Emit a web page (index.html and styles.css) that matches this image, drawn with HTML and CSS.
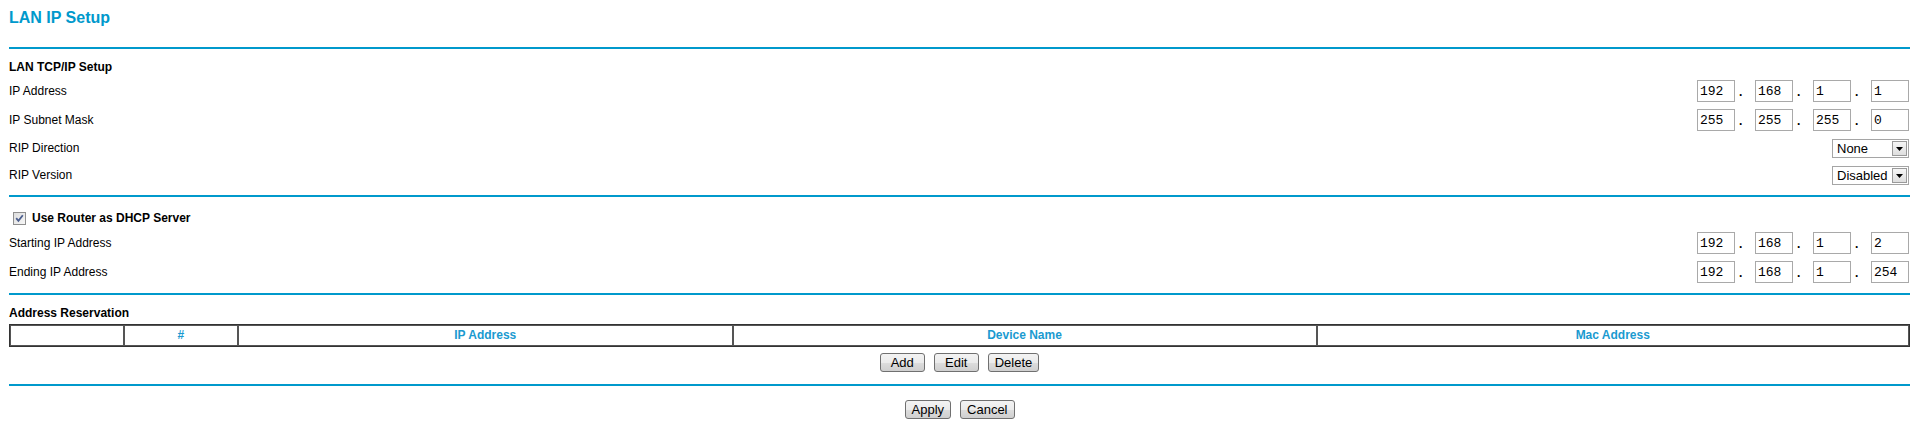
FILE: index.html
```html
<!DOCTYPE html>
<html>
<head>
<meta charset="utf-8">
<title>LAN IP Setup</title>
<link rel="stylesheet" href="styles.css">
</head>
<body>
<div class="page">
  <h1 class="title">LAN IP Setup</h1>
  <div class="rule rule-top"></div>

  <div class="sec-head head-tcp">LAN TCP/IP Setup</div>
  <div class="row row-ip1">
    <span class="label">IP Address</span>
    <div class="ip">
      <input class="oct" type="text" value="192"><span class="dot">.</span><input class="oct" type="text" value="168"><span class="dot">.</span><input class="oct" type="text" value="1"><span class="dot">.</span><input class="oct" type="text" value="1">
    </div>
  </div>
  <div class="row row-ip2">
    <span class="label">IP Subnet Mask</span>
    <div class="ip">
      <input class="oct" type="text" value="255"><span class="dot">.</span><input class="oct" type="text" value="255"><span class="dot">.</span><input class="oct" type="text" value="255"><span class="dot">.</span><input class="oct" type="text" value="0">
    </div>
  </div>
  <div class="row row-sel row-sel1">
    <span class="label">RIP Direction</span>
    <div class="select">
      <span class="select-text">None</span>
      <span class="select-btn"><svg width="13" height="13" viewBox="0 0 13 13"><path d="M3 5h7l-3.5 4z" fill="#000"/></svg></span>
    </div>
  </div>
  <div class="row row-sel row-sel2">
    <span class="label">RIP Version</span>
    <div class="select">
      <span class="select-text">Disabled</span>
      <span class="select-btn"><svg width="13" height="13" viewBox="0 0 13 13"><path d="M3 5h7l-3.5 4z" fill="#000"/></svg></span>
    </div>
  </div>
  <div class="rule rule-mid"></div>

  <div class="sec-head head-dhcp">
    <span class="check"><svg width="13" height="13" viewBox="0 0 13 13"><defs><linearGradient id="cb" x1="0" y1="0" x2="1" y2="1"><stop offset="0" stop-color="#dcdcdc"/><stop offset="1" stop-color="#f8f8f8"/></linearGradient></defs><rect x="0.5" y="0.5" width="12" height="12" fill="url(#cb)" stroke="#8f8f8f"/><path d="M3.2 6.2 L5.4 8.8 L9.8 3.2" stroke="#4b5e8e" stroke-width="1.8" fill="none"/></svg></span>
    <span>Use Router as DHCP Server</span>
  </div>
  <div class="row row-ip3">
    <span class="label">Starting IP Address</span>
    <div class="ip">
      <input class="oct" type="text" value="192"><span class="dot">.</span><input class="oct" type="text" value="168"><span class="dot">.</span><input class="oct" type="text" value="1"><span class="dot">.</span><input class="oct" type="text" value="2">
    </div>
  </div>
  <div class="row row-ip4">
    <span class="label">Ending IP Address</span>
    <div class="ip">
      <input class="oct" type="text" value="192"><span class="dot">.</span><input class="oct" type="text" value="168"><span class="dot">.</span><input class="oct" type="text" value="1"><span class="dot">.</span><input class="oct" type="text" value="254">
    </div>
  </div>
  <div class="rule rule-mid"></div>

  <div class="sec-head head-res">Address Reservation</div>
  <table class="res">
    <colgroup>
      <col class="c1"><col class="c2"><col class="c3"><col class="c4"><col class="c5">
    </colgroup>
    <tr>
      <th></th><th>#</th><th>IP Address</th><th>Device Name</th><th>Mac Address</th>
    </tr>
  </table>
  <div class="btns btns-res">
    <button class="btn">Add</button><button class="btn">Edit</button><button class="btn">Delete</button>
  </div>
  <div class="rule rule-bot"></div>
  <div class="btns btns-apply">
    <button class="btn">Apply</button><button class="btn">Cancel</button>
  </div>
</div>
</body>
</html>
```

FILE: styles.css
```css
html, body {
  margin: 0;
  padding: 0;
  background: #fff;
}
body {
  font-family: "Liberation Sans", Arial, sans-serif;
  font-size: 12px;
  color: #000;
}
.page {
  padding: 8px 10px 0 9px;
}
.title {
  margin: 0;
  font-size: 16px;
  line-height: 20px;
  font-weight: bold;
  color: #0099cc;
}
.rule {
  height: 2px;
  background: #0099cc;
}
.rule-top { margin-top: 19px; }
.rule-mid { margin-top: 10px; }
.rule-bot { margin-top: 12px; }

.sec-head {
  font-weight: bold;
  line-height: 16px;
  height: 16px;
}
.head-tcp { margin-top: 10px; }
.head-dhcp {
  margin-top: 13px;
  display: flex;
  align-items: center;
}
.head-res { margin-top: 10px; }

.check {
  display: inline-flex;
  width: 13px;
  height: 13px;
  margin-left: 4px;
  margin-right: 6px;
}

.row {
  display: flex;
  justify-content: space-between;
  align-items: center;
  height: 22px;
}
.label {
  line-height: 16px;
}
.row-ip1 { margin-top: 5px; }
.row-ip2 { margin-top: 7px; }
.row-ip3 { margin-top: 6px; }
.row-ip4 { margin-top: 7px; }
.row-sel {
  height: 19px;
  align-items: flex-start;
  margin-top: 8px;
}
.row-sel .label {
  padding-top: 1px;
}

.ip {
  display: flex;
  align-items: center;
  margin-right: 1px;
}
.oct {
  box-sizing: border-box;
  width: 38px;
  height: 22px;
  margin: 0;
  padding: 0 0 0 2px;
  border: 1px solid #a9a9a9;
  font-family: "Liberation Mono", "Courier New", monospace;
  font-size: 13px;
  color: #000;
  background: #fff;
  outline: none;
}
.dot {
  width: 16px;
  padding-left: 4px;
  font-weight: bold;
  font-size: 12px;
  line-height: 22px;
  padding-top: 2px;
  box-sizing: content-box;
}

.select {
  box-sizing: border-box;
  width: 77px;
  height: 19px;
  margin-right: 1px;
  border: 1px solid #a5a5a5;
  display: flex;
  align-items: center;
  justify-content: space-between;
  background: #fff;
}
.select-text {
  padding-left: 4px;
  font-size: 13px;
  line-height: 17px;
}
.select-btn {
  box-sizing: border-box;
  width: 15px;
  height: 15px;
  margin-right: 1px;
  border: 1px solid #9a9a9a;
  background: linear-gradient(#f6f6f6, #dedede);
  display: flex;
  align-items: center;
  justify-content: center;
}

.res {
  margin-top: 3px;
  width: 100%;
  table-layout: fixed;
  border-collapse: separate;
  border-spacing: 0;
  border: 1px solid #333;
}
.c1 { width: 6%; }
.c2 { width: 6%; }
.c3 { width: 26.05%; }
.c4 { width: 30.75%; }
.c5 { width: 31.2%; }
.res th {
  height: 19px;
  padding: 0;
  border: 1px solid #555;
  font-size: 12px;
  font-weight: bold;
  line-height: 19px;
  color: #1a9ad0;
  text-align: center;
}

.btns {
  display: flex;
  justify-content: center;
  gap: 9px;
}
.btns-res { margin-top: 6px; }
.btns-apply { margin-top: 14px; }
.btn {
  box-sizing: border-box;
  min-width: 45px;
  height: 19px;
  margin: 0;
  padding: 0 6px;
  border: 1px solid #707070;
  border-radius: 3px;
  background: linear-gradient(#f3f3f3 0%, #ebebeb 50%, #dddddd 51%, #cfcfcf 100%);
  font-family: "Liberation Sans", Arial, sans-serif;
  font-size: 13px;
  line-height: 16px;
  color: #000;
}
```
